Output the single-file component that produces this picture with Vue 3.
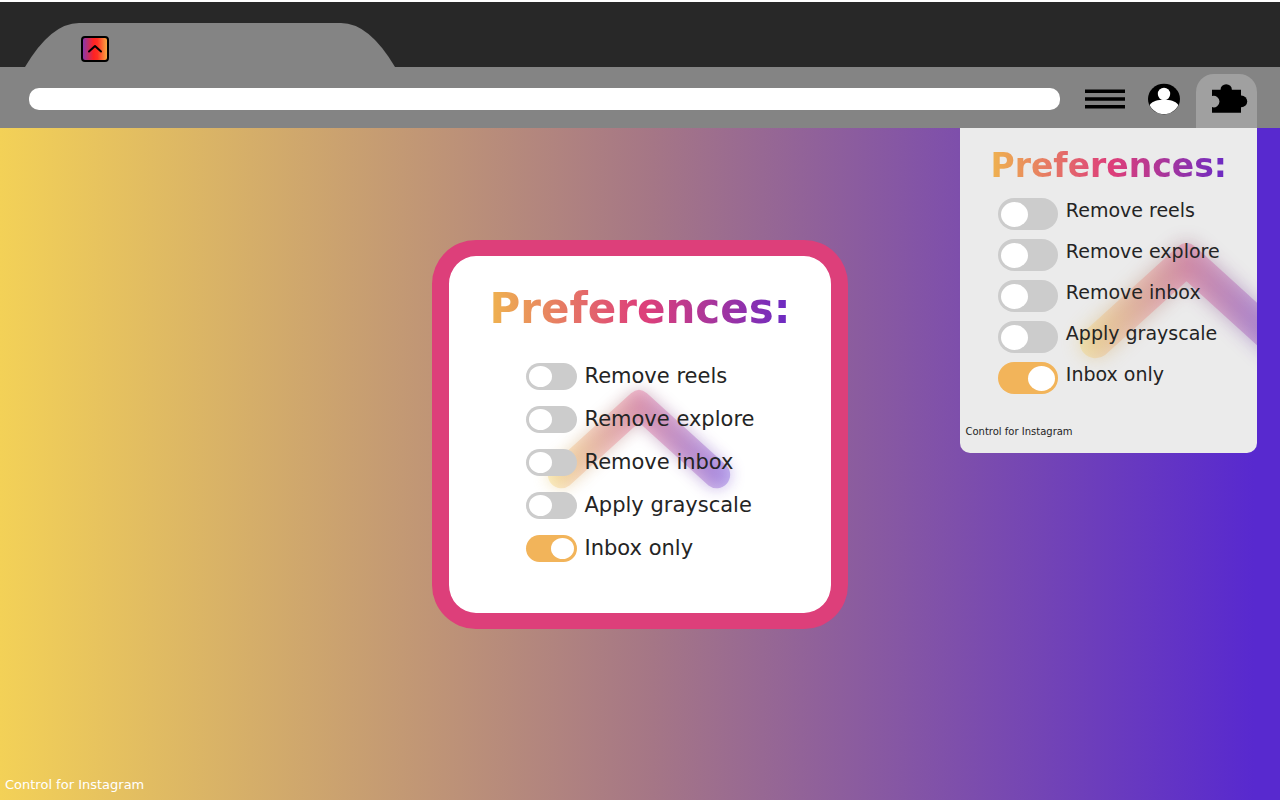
<template>
  <div class="browser">
    <header class="chrome">
      <div class="tab-strip">
        <svg class="tab" width="370" height="44" viewBox="0 0 370 44" aria-hidden="true">
          <path d="M0 44 Q26 0 54 0 H316 Q344 0 370 44 Z" fill="#848484" />
          <defs>
            <linearGradient id="favicon-fill" x1="0" y1="0" x2="1" y2="0">
              <stop offset="0" stop-color="#7c3ab8" />
              <stop offset="0.45" stop-color="#ff2222" />
              <stop offset="0.6" stop-color="#ff3024" />
              <stop offset="1" stop-color="#f7b545" />
            </linearGradient>
          </defs>
          <rect x="57" y="14" width="26" height="24" rx="3" fill="url(#favicon-fill)" stroke="#000" stroke-width="2" />
          <path d="M64 28.5 L70 23 L76 28.5" fill="none" stroke="#000" stroke-width="2" stroke-linecap="round" stroke-linejoin="round" />
        </svg>
      </div>
      <div class="toolbar">
        <input v-model="address" class="address" type="text" aria-label="Address" />
        <button class="tool tool--menu" type="button" aria-label="Menu">
          <svg width="40" height="20" viewBox="0 0 40 20">
            <path d="M0 2.3 H40 M0 10 H40 M0 17.7 H40" stroke="#000" stroke-width="3.4" />
          </svg>
        </button>
        <button class="tool tool--account" type="button" aria-label="Account">
          <svg width="32" height="32" viewBox="0 0 32 32">
            <ellipse cx="16" cy="16" rx="16" ry="15.3" fill="#000" />
            <circle cx="16" cy="11" r="6.2" fill="#fff" />
            <path d="M1.6 22 C5 17.8 10 16.8 16 16.8 C22 16.8 27 17.8 30.4 22 C27.8 27.5 22.4 31.1 16 31.1 C9.6 31.1 4.2 27.5 1.6 22 Z" fill="#fff" />
          </svg>
        </button>
        <button class="tool tool--extensions" type="button" aria-label="Extensions">
          <svg width="36" height="30" viewBox="0 0 36 30">
            <circle cx="14.2" cy="5.9" r="5.7" fill="#000" />
            <circle cx="29.3" cy="17.4" r="5.9" fill="#000" />
            <path d="M0 5.8 H29 V28.8 H0 V23.1 A5.8 5.8 0 1 0 0 12 Z" fill="#000" />
          </svg>
        </button>
      </div>
    </header>

    <main class="page">
      <section class="panel card">
        <svg class="chevron" viewBox="-120 -30 240 160" aria-hidden="true">
          <defs>
            <linearGradient id="chevron-fill" gradientUnits="userSpaceOnUse" x1="-92" y1="0" x2="92" y2="0">
              <stop offset="0" stop-color="#f3d157" />
              <stop offset="0.5" stop-color="#dd3f7a" />
              <stop offset="1" stop-color="#5829cf" />
            </linearGradient>
            <linearGradient id="chevron-glow" gradientUnits="userSpaceOnUse" x1="-92" y1="0" x2="92" y2="0">
              <stop offset="0" stop-color="#e8c040" />
              <stop offset="0.5" stop-color="#8a3a5c" />
              <stop offset="1" stop-color="#5829cf" />
            </linearGradient>
            <filter id="chevron-blur" x="-30%" y="-50%" width="160%" height="200%">
              <feGaussianBlur stdDeviation="8" />
            </filter>
          </defs>
          <path :d="chevron" fill="url(#chevron-glow)" opacity="0.36" filter="url(#chevron-blur)" />
          <path :d="chevron" fill="url(#chevron-fill)" opacity="0.3" />
        </svg>
        <h1 class="title">Preferences:</h1>
        <ul class="options">
          <li v-for="option in options" :key="option.id" class="option">
            <input :id="'card-' + option.id" v-model="option.on" class="toggle" type="checkbox" />
            <label :for="'card-' + option.id">{{ option.label }}</label>
          </li>
        </ul>
      </section>

      <aside class="panel popup">
        <svg class="chevron" viewBox="-120 -30 240 160" aria-hidden="true">
          <path :d="chevron" fill="url(#chevron-glow)" opacity="0.36" filter="url(#chevron-blur)" />
          <path :d="chevron" fill="url(#chevron-fill)" opacity="0.3" />
        </svg>
        <h2 class="title">Preferences:</h2>
        <ul class="options">
          <li v-for="option in options" :key="option.id" class="option">
            <input :id="'popup-' + option.id" v-model="option.on" class="toggle" type="checkbox" />
            <label :for="'popup-' + option.id">{{ option.label }}</label>
          </li>
        </ul>
        <p class="caption">Control for Instagram</p>
      </aside>

      <footer class="footer">Control for Instagram</footer>
    </main>
  </div>
</template>

<script setup>
import { ref } from 'vue'

const address = ref('')

const options = ref([
  { id: 'reels', label: 'Remove reels', on: false },
  { id: 'explore', label: 'Remove explore', on: false },
  { id: 'inbox', label: 'Remove inbox', on: false },
  { id: 'grayscale', label: 'Apply grayscale', on: false },
  { id: 'inbox-only', label: 'Inbox only', on: true }
])

// Apex at the top centre, both arms ending in round caps
const chevron =
  'M-87.5 76.5 L-8 4.3 Q0 -3 8 4.3 L87.5 76.5 A13.5 13.5 0 0 1 69.5 96.5 L0 33.5 L-69.5 96.5 A13.5 13.5 0 0 1 -87.5 76.5 Z'
</script>

<style>
body {
  margin: 0;
}
</style>

<style scoped>
.browser {
  display: flex;
  flex-direction: column;
  min-height: 100vh;
  font-family: Verdana, "DejaVu Sans", sans-serif;
  color: #242424;
}

/* Browser chrome */
.chrome {
  border-top: 2px solid #fff;
}

.tab-strip {
  display: flex;
  padding: 21px 25px 0;
  background: #282828;
}

.tab {
  display: block;
}

.toolbar {
  display: flex;
  align-items: center;
  box-sizing: border-box;
  height: 61px;
  padding: 2px 23px 0 29px;
  background: #848484;
}

.address {
  flex: 1;
  min-width: 0;
  height: 22px;
  margin-right: 25px;
  padding: 0 12px;
  box-sizing: border-box;
  border: 0;
  border-radius: 10px;
  background: #fff;
  font: inherit;
  font-size: 13px;
}

.tool {
  display: flex;
  padding: 0;
  border: 0;
  background: none;
  cursor: pointer;
}

.tool--account {
  margin: 0 16px 0 23px;
}

.tool--extensions {
  align-self: flex-end;
  padding: 10px 9px 14px 16px;
  border-radius: 18px 18px 0 0;
  background: #a0a0a0;
}

/* Page */
.page {
  position: relative;
  flex: 1;
  display: flex;
  flex-direction: column;
  align-items: center;
  padding-top: 112px;
  background: linear-gradient(90deg, #f3d157 0%, #a57686 51%, #5829cf 98%);
}

.panel {
  position: relative;
  overflow: hidden;
}

.title {
  position: relative;
  width: max-content;
  margin: 0 auto;
  font-weight: bold;
  background: linear-gradient(90deg, #efb34f 0%, #dd3f7a 50%, #dd3f7a 52%, #6a2ac4 100%);
  background-clip: text;
  color: transparent;
}

.options {
  position: relative;
  display: flex;
  flex-direction: column;
  width: max-content;
  margin: 0 auto;
  padding: 0;
  list-style: none;
}

.option {
  display: flex;
  gap: 8px;
}

.toggle {
  appearance: none;
  display: flex;
  align-items: center;
  box-sizing: border-box;
  margin: 0;
  padding: 0 3px;
  border-radius: 16px;
  background: #ccc;
  cursor: pointer;
}

.toggle::before {
  content: "";
  border-radius: 50%;
  background: #fff;
}

.toggle:checked {
  justify-content: flex-end;
  background: #f2b45a;
}

.chevron {
  position: absolute;
}

/* Centre card */
.card {
  padding: 28px 40px 51px;
  border: solid #dd3f7a;
  border-width: 16px 17px;
  border-radius: 44px;
  background: #fff;
}

.card .title {
  font-size: 42px;
  line-height: 50px;
}

.card .options {
  gap: 16px;
  margin-top: 29px;
}

.card .option {
  font-size: 21px;
  line-height: 26px;
}

.card .toggle {
  width: 51px;
  height: 27px;
}

.card .toggle::before {
  width: 23px;
  height: 21px;
}

.card .chevron {
  top: 103px;
  left: 50%;
  width: 240px;
  margin-left: -121px;
}

/* Extension popup */
.popup {
  position: absolute;
  top: 0;
  right: 23px;
  padding-top: 18px;
  border-radius: 0 0 10px 10px;
  background: #ebebeb;
}

.popup .title {
  padding: 0 30px;
  background-origin: content-box;
  font-size: 33px;
  line-height: 40px;
}

.popup .options {
  gap: 9px;
  margin-top: 12px;
}

.popup .option {
  font-size: 19px;
  line-height: 24px;
}

.popup .toggle {
  width: 60px;
  height: 32px;
}

.popup .toggle::before {
  width: 27px;
  height: 25px;
}

.popup .chevron {
  top: 79px;
  right: -70px;
  width: 281px;
}

.caption {
  position: relative;
  margin: 31px 0 14px 5px;
  font-size: 10px;
  line-height: 14px;
}

.footer {
  align-self: flex-start;
  margin-top: auto;
  padding: 5px;
  font-size: 13px;
  line-height: 20px;
  color: #fff;
}
</style>
